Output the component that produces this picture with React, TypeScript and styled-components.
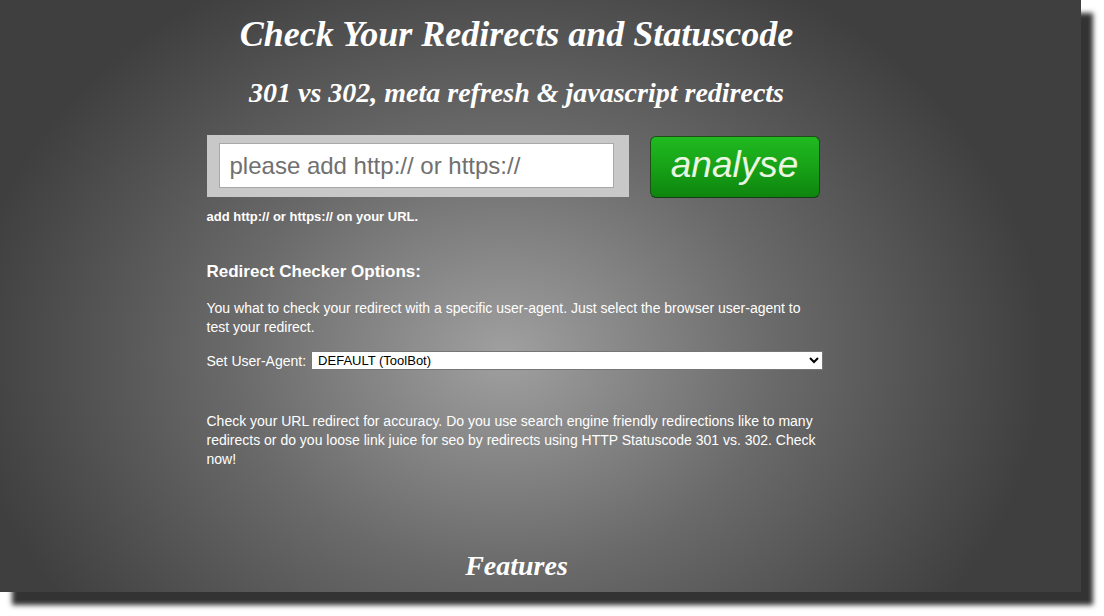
import styled, { createGlobalStyle } from "styled-components"

const Global = createGlobalStyle`
    html, body {
        margin: 0;
        padding: 0;
        background: #ffffff;
    }
    body {
        width: 1104px;
        height: 616px;
        overflow: hidden;
        font-family: "Liberation Sans", Arial, sans-serif;
    }
`

const Panel = styled.div`
    width: 1081px;
    height: 592px;
    box-sizing: border-box;
    padding-right: 48px;
    background: radial-gradient(ellipse 540px 430px at 505px 355px, #a0a0a0 0%, #6a6a6a 50%, #3f3f3f 100%);
    box-shadow: 12px 13px 5px #333333;
    display: flex;
    flex-direction: column;
    align-items: center;
`

const Title = styled.h1`
    margin: 13px 0 0;
    font-family: "Liberation Serif", "Times New Roman", serif;
    font-style: italic;
    font-weight: bold;
    font-size: 36px;
    line-height: 42px;
    color: #ffffff;
`

const SubTitle = styled.h2`
    margin: 22px 0 0;
    font-family: "Liberation Serif", "Times New Roman", serif;
    font-style: italic;
    font-weight: bold;
    font-size: 28px;
    line-height: 32px;
    color: #ffffff;
`

const Column = styled.div`
    width: 620px;
    display: flex;
    flex-direction: column;
    color: #ffffff;
    font-size: 14px;
`

const SearchRow = styled.div`
    display: flex;
    align-items: flex-start;
    gap: 21px;
    margin-top: 26px;
`

const InputFrame = styled.div`
    width: 422px;
    height: 62px;
    box-sizing: border-box;
    background: #c8c8c8;
    padding: 8px 15px 9px 12px;
    display: flex;
`

const UrlInput = styled.input`
    flex: 1;
    border: 1px solid #a8a8a8;
    background: #ffffff;
    padding: 0 10px;
    font-family: "Liberation Sans", Arial, sans-serif;
    font-size: 24px;
    color: #333;
    outline: none;
    &::placeholder {
        color: #707070;
    }
`

const AnalyseButton = styled.button`
    width: 170px;
    height: 62px;
    margin-top: 1px;
    border: 1px solid #1f4d1a;
    border-bottom-color: #173d14;
    border-radius: 6px;
    background: linear-gradient(#20ba20 0%, #17a217 50%, #0e850e 100%);
    color: #eaf6e2;
    font-family: "Liberation Sans", Arial, sans-serif;
    font-style: italic;
    font-size: 37px;
    padding: 0 0 4px;
    cursor: pointer;
`

const Hint = styled.p`
    margin: 11px 0 0;
    font-size: 13px;
    font-weight: bold;
`

const OptionsHeading = styled.h3`
    margin: 38px 0 0;
    font-size: 17px;
    line-height: 20px;
    font-weight: bold;
`

const Text = styled.p<{ $top: number }>`
    margin: ${(p) => p.$top}px 0 0;
    font-size: 14px;
    line-height: 19px;
`

const AgentRow = styled.label`
    display: flex;
    align-items: center;
    gap: 5px;
    margin-top: 14px;
    font-size: 14px;
`

const AgentSelect = styled.select`
    width: 512px;
    height: 19px;
    font-family: "Liberation Sans", Arial, sans-serif;
    font-size: 13px;
    padding: 0 2px;
    border: 1px solid #767676;
    border-radius: 0;
    background: #ffffff;
    color: #000;
`

const Features = styled.h2`
    margin: auto 0 10px;
    font-family: "Liberation Serif", "Times New Roman", serif;
    font-style: italic;
    font-weight: bold;
    font-size: 28px;
    line-height: 32px;
    color: #ffffff;
`

export default function App() {
    return (
        <>
            <Global />
            <Panel>
                <Title>Check Your Redirects and Statuscode</Title>
                <SubTitle>301 vs 302, meta refresh &amp; javascript redirects</SubTitle>
                <Column>
                    <SearchRow>
                        <InputFrame>
                            <UrlInput placeholder="please add http:// or https://" />
                        </InputFrame>
                        <AnalyseButton>analyse</AnalyseButton>
                    </SearchRow>
                    <Hint>add http:// or https:// on your URL.</Hint>
                    <OptionsHeading>Redirect Checker Options:</OptionsHeading>
                    <Text $top={17}>
                        You what to check your redirect with a specific user-agent. Just select the browser user-agent to test your redirect.
                    </Text>
                    <AgentRow>
                        Set User-Agent:
                        <AgentSelect defaultValue="default">
                            <option value="default">DEFAULT (ToolBot)</option>
                        </AgentSelect>
                    </AgentRow>
                    <Text $top={42}>
                        Check your URL redirect for accuracy. Do you use search engine friendly redirections like to many redirects or do you loose link juice for seo by redirects using HTTP Statuscode 301 vs. 302. Check now!
                    </Text>
                </Column>
                <Features>Features</Features>
            </Panel>
        </>
    )
}
